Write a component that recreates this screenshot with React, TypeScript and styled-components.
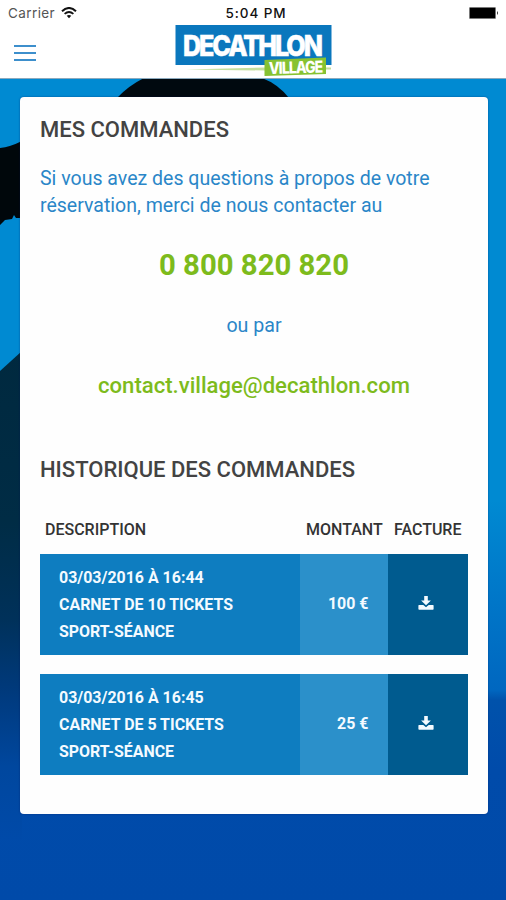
import React from "react";
import styled, { createGlobalStyle } from "styled-components";

const GlobalStyle = createGlobalStyle`
  * { box-sizing: border-box; }
  html, body { margin: 0; padding: 0; background: #004aaa; }
  body { font-family: Roboto, "Liberation Sans", sans-serif; overflow: hidden; }
`;

const Screen = styled.div`
  position: relative;
  display: flex;
  flex-direction: column;
  width: 506px;
  height: 900px;
  overflow: hidden;
  background: linear-gradient(#008ad2 0 500px, #007aca 580px, #0067c0 690px, #0052ab 700px, #004baa 770px, #004aa9 900px);
`;

const Backdrop = styled.svg`
  position: absolute;
  inset: 0;
`;

const Header = styled.header`
  position: relative;
  flex: none;
  height: 79px;
  background: #fff;
  border-bottom: 1px solid #8ba9bd;
`;

const StatusBar = styled.div`
  display: grid;
  grid-template-columns: 1fr auto 1fr;
  align-items: center;
  height: 26px;
  padding: 0 7px 0 8px;
`;

const Carrier = styled.div`
  display: flex;
  align-items: center;
  gap: 6px;
  color: #555;
  font: 13.5px/26px Inter, sans-serif;
  letter-spacing: 0.4px;
`;

const Clock = styled.div`
  padding-left: 5px;
  color: #111;
  font: 500 13.5px/26px Inter, sans-serif;
  letter-spacing: 0.9px;
`;

const Battery = styled.svg`
  justify-self: end;
`;

const NavBar = styled.nav`
  display: grid;
  grid-template-columns: 1fr auto 1fr;
  height: 52px;
  padding-left: 14px;
`;

const MenuButton = styled.button`
  display: flex;
  flex-direction: column;
  justify-content: space-between;
  width: 22px;
  height: 16px;
  margin-top: 19px;
  padding: 0;
  border: 0;
  background: none;
`;

const MenuBar = styled.span`
  height: 2px;
  background: #3d8fcc;
`;

const Logo = styled.svg`
  margin: -2px 0 0 -14px;
  overflow: visible;
`;

const Card = styled.main`
  position: relative;
  flex: none;
  display: flex;
  flex-direction: column;
  width: 468px;
  height: 717px;
  margin: 18px 0 0 20px;
  padding: 20px 20px 0;
  border-radius: 4px;
  background: #fefefe;
  box-shadow: 0 0 2px rgba(0, 20, 90, 0.5);
`;

const Title = styled.h1`
  margin: 0;
  color: #434343;
  font-size: 22px;
  font-weight: 500;
  line-height: 26px;
  white-space: nowrap;
`;

const Intro = styled.p`
  margin: 22px 0 0;
  color: #2a86c8;
  font-size: 19.55px;
  line-height: 27px;
  white-space: nowrap;
`;

const Phone = styled.a`
  margin-top: 26px;
  color: #7dbb1c;
  font-size: 29.3px;
  font-weight: 700;
  line-height: 40px;
  text-align: center;
`;

const Alternative = styled.p`
  margin: 27px 0 0;
  color: #2a86c8;
  font-size: 19.6px;
  line-height: 27px;
  text-align: center;
`;

const Email = styled.a`
  margin: 31px 0 57px;
  color: #7dbb1c;
  font-size: 22.1px;
  font-weight: 500;
  line-height: 30px;
  text-align: center;
`;

const TableHead = styled.div`
  display: grid;
  grid-template-columns: 261px 88px 1fr;
  height: 26px;
  margin-top: 34px;
  padding-left: 5px;
  color: #333;
  font-size: 16px;
  font-weight: 500;
  line-height: 26px;
  white-space: nowrap;
`;

const OrderList = styled.div`
  display: flex;
  flex-direction: column;
  gap: 19px;
  margin-top: 11px;
`;

const Order = styled.div`
  display: grid;
  grid-template-columns: 260px 88px 80px;
  flex: none;
  height: 101px;
  color: #f4faff;
  font-size: 15.95px;
  font-weight: 700;
`;

const Description = styled.div`
  padding: 10px 0 0 19px;
  background: #0e7dc0;
  line-height: 27px;
  white-space: nowrap;
`;

const Amount = styled.div`
  padding-right: 19.5px;
  background: #2b90ca;
  line-height: 100px;
  text-align: right;
`;

const Invoice = styled.div`
  display: flex;
  align-items: center;
  justify-content: center;
  padding: 0 5px 4px 0;
  background: #005b8f;
`;

const orders = [
  { date: "03/03/2016 À 16:44", label: "CARNET DE 10 TICKETS", amount: "100 €" },
  { date: "03/03/2016 À 16:45", label: "CARNET DE 5 TICKETS", amount: "25 €" },
];

const WifiIcon = () => (
  <svg width="16" height="12" viewBox="0 0 16 12" fill="none" stroke="#111">
    <path d="M1 4.2Q8-2.2 15 4.2" strokeWidth="2" />
    <path d="M3.6 6.9Q8 3 12.4 6.9" strokeWidth="1.8" />
    <path d="M8 11.2L5.7 8.8Q8 7 10.3 8.8Z" fill="#111" stroke="none" />
  </svg>
);

const DownloadIcon = () => (
  <svg width="16" height="16" viewBox="0 0 16 16" fill="#f4faff">
    <path d="M6.2 1h3.6v4.4h3.1L8 10.2 3.1 5.4h3.1z" />
    <path d="M1 10h4.3L8 12.3 10.7 10H15q.6 0 .6.6v3.5q0 .7-.7.7H1.1q-.7 0-.7-.7v-3.5Q.4 10 1 10z" />
  </svg>
);

export default function App() {
  return (
    <>
      <GlobalStyle />
      <Screen>
        <Backdrop width="506" height="900" viewBox="0 0 506 900">
          <defs>
            <linearGradient id="slope" x1="0" y1="350" x2="0" y2="840" gradientUnits="userSpaceOnUse">
              <stop offset="0" stopColor="#00293f" />
              <stop offset="0.35" stopColor="#002c45" />
              <stop offset="0.55" stopColor="#00315a" />
              <stop offset="0.7" stopColor="#003a7d" />
              <stop offset="0.85" stopColor="#00479e" />
              <stop offset="1" stopColor="#004aa9" />
            </linearGradient>
          </defs>
          <path d="M0 148Q10 147 22 141V218L16 218L14 215L12 219L5 220L0 225z" fill="#00070b" />
          <path d="M0 371L22 351V840H0z" fill="url(#slope)" />
          <path d="M117 98Q128 86 144 78H262Q278 84 289 98z" fill="#00090f" />
        </Backdrop>
        <Header>
          <StatusBar>
            <Carrier>
              Carrier <WifiIcon />
            </Carrier>
            <Clock>5:04 PM</Clock>
            <Battery width="30" height="12" viewBox="0 0 30 12">
              <rect x="0.5" y="0.5" width="26" height="11" rx="0.5" fill="#000" stroke="#777" strokeWidth="0.7" />
              <path d="M28 4Q30 6 28 8z" fill="#333" />
            </Battery>
          </StatusBar>
          <NavBar>
            <MenuButton aria-label="Menu">
              <MenuBar />
              <MenuBar />
              <MenuBar />
            </MenuButton>
            <Logo width="160" height="54" viewBox="173 24 160 54">
              <path d="M186 69.5L265 67.5V70.5zM325 67.5H331V69.5H325z" fill="#c5df9d" />
              <rect x="175.5" y="25" width="156" height="40" fill="#0a77bd" />
              <text
                transform="translate(183 55.5) scale(0.88 1)"
                textLength="159"
                lengthAdjust="spacing"
                fill="#fff"
                stroke="#fff"
                strokeWidth="0.6"
                fontFamily="Inter, sans-serif"
                fontWeight="800"
                fontSize="28.5"
              >
                DECATHLON
              </text>
              <path d="M264.5 60L326 57.5V74L264.5 76z" fill="#86c232" />
              <text
                transform="translate(269 74) rotate(-1.5) scale(0.85 1)"
                textLength="64"
                lengthAdjust="spacing"
                fill="#fff"
                fontFamily="Inter, sans-serif"
                fontWeight="800"
                fontSize="16.5"
              >
                VILLAGE
              </text>
            </Logo>
            <span />
          </NavBar>
        </Header>
        <Card>
          <Title>MES COMMANDES</Title>
          <Intro>
            Si vous avez des questions à propos de votre
            <br />
            réservation, merci de nous contacter au
          </Intro>
          <Phone>0 800 820 820</Phone>
          <Alternative>ou par</Alternative>
          <Email>contact.village@decathlon.com</Email>
          <Title as="h2">HISTORIQUE DES COMMANDES</Title>
          <TableHead>
            <span>DESCRIPTION</span>
            <span>MONTANT</span>
            <span>FACTURE</span>
          </TableHead>
          <OrderList>
            {orders.map((o) => (
              <Order key={o.date}>
                <Description>
                  {o.date}
                  <br />
                  {o.label}
                  <br />
                  SPORT-SÉANCE
                </Description>
                <Amount>{o.amount}</Amount>
                <Invoice>
                  <DownloadIcon />
                </Invoice>
              </Order>
            ))}
          </OrderList>
        </Card>
      </Screen>
    </>
  );
}
